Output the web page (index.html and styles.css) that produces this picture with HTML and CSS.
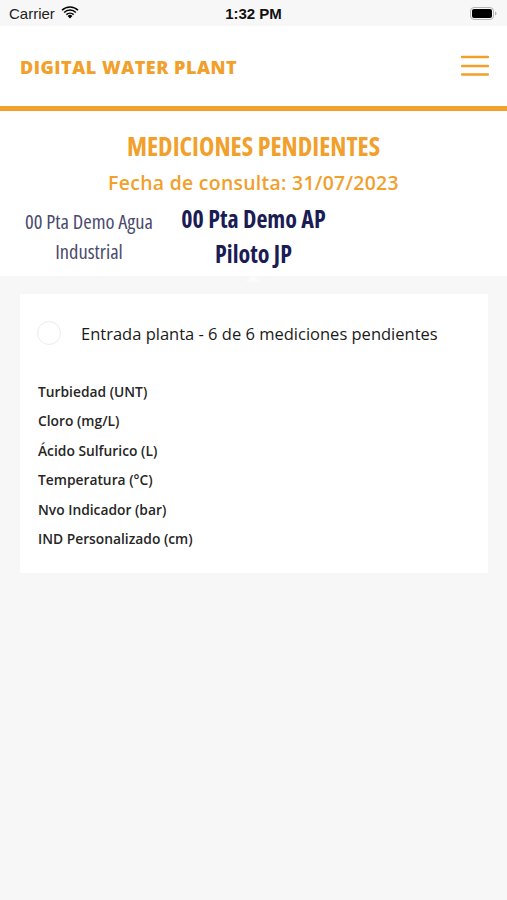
FILE: index.html
```html
<!DOCTYPE html>
<html lang="es">
<head>
<meta charset="utf-8">
<title>Digital Water Plant</title>
<link rel="stylesheet" href="styles.css">
</head>
<body>
<div class="status">
  <div class="status-left">
    <span class="carrier">Carrier</span>
    <svg class="wifi" width="18" height="13" viewBox="0 0 18 13"><path d="M9 12.5 L6.6 9.9 A3.4 3.4 0 0 1 11.4 9.9 Z" fill="#000"/><path d="M4.8 8.1 A6 6 0 0 1 13.2 8.1 L12.1 9.2 A4.5 4.5 0 0 0 5.9 9.2 Z" fill="#000"/><path d="M2.6 5.9 A9.2 9.2 0 0 1 15.4 5.9 L14.3 7 A7.6 7.6 0 0 0 3.7 7 Z" fill="#000"/><path d="M0.4 3.7 A12.3 12.3 0 0 1 17.6 3.7 L16.5 4.8 A10.8 10.8 0 0 0 1.5 4.8 Z" fill="#000"/></svg>
  </div>
  <span class="time">1:32 PM</span>
  <svg class="battery" width="27" height="13" viewBox="0 0 27 13"><rect x="0.5" y="0.5" width="23" height="12" rx="3.5" fill="none" stroke="#b5b5b5"/><rect x="2" y="2" width="20" height="9" rx="2" fill="#000"/><path d="M25 4.5 Q26.5 5 26.5 6.5 Q26.5 8 25 8.5 Z" fill="#b5b5b5"/></svg>
</div>

<header class="header">
  <span class="brand">DIGITAL WATER PLANT</span>
  <svg class="menu" width="28" height="22" viewBox="0 0 28 22"><path d="M1 2h26M1 11h26M1 19.5h26" stroke="#f1a02b" stroke-width="2.4" stroke-linecap="round"/></svg>
</header>
<div class="rule"></div>

<section class="summary">
  <h1 class="title">MEDICIONES PENDIENTES</h1>
  <p class="date">Fecha de consulta: 31/07/2023</p>
  <div class="plant-row">
    <div class="client">00 Pta Demo Agua<br>Industrial</div>
    <div class="plant">00 Pta Demo AP<br>Piloto JP</div>
  </div>
  <span class="notch"></span>
</section>

<main class="content">
  <div class="card">
    <div class="card-head">
      <span class="spinner"></span>
      <span class="card-title">Entrada planta - 6 de 6 mediciones pendientes</span>
    </div>
    <ul class="items">
      <li>Turbiedad (UNT)</li>
      <li>Cloro (mg/L)</li>
      <li>Ácido Sulfurico (L)</li>
      <li>Temperatura (°C)</li>
      <li>Nvo Indicador (bar)</li>
      <li>IND Personalizado (cm)</li>
    </ul>
  </div>
</main>
</body>
</html>
```

FILE: styles.css
```css
* { box-sizing: border-box; }
html, body { margin: 0; padding: 0; }
body {
  width: 507px;
  height: 900px;
  background: #f7f7f7;
  font-family: "Open Sans", "Noto Sans", sans-serif;
  color: #222;
  overflow: hidden;
}
.status {
  height: 26px;
  background: #f7f7f7;
  display: flex;
  align-items: center;
  justify-content: space-between;
  padding: 0 10px 0 9px;
  font-family: "Liberation Sans", Arial, sans-serif;
  position: relative;
}
.status-left { display: flex; align-items: center; gap: 6px; }
.carrier { font-size: 15px; color: #222; }
.wifi { margin-top: -2px; }
.time {
  position: absolute;
  left: 0; right: 0;
  text-align: center;
  font-size: 15px;
  font-weight: bold;
  color: #111;
  pointer-events: none;
}
.battery { margin-top: 1px; }

.header {
  height: 80px;
  background: #fff;
  display: flex;
  align-items: center;
  justify-content: space-between;
  padding: 0 18px 0 20px;
}
.brand {
  color: #f1a02b;
  font-weight: 800;
  font-size: 18px;
  letter-spacing: 0.5px;
  margin-top: 1px;
}
.menu { display: block; }
.rule { height: 5px; background: #f1a02b; }

.summary {
  background: #fff;
  height: 165px;
  padding-top: 17px;
  text-align: center;
  position: relative;
}
.title {
  margin: 0;
  font-size: 26px;
  line-height: 36px;
  font-weight: 700;
  font-stretch: 75%;
  color: #f1a02b;
}
.date {
  margin: 0;
  font-size: 19.4px;
  line-height: 37px;
  font-weight: 600;
  color: #f1a02b;
  letter-spacing: 0.3px;
}
.plant-row { display: flex; }
.client {
  width: 178px;
  text-align: center;
  font-size: 20.5px;
  line-height: 30px;
  font-weight: 400;
  font-stretch: 75%;
  color: #4b4b6e;
  padding-top: 5px;
}
.plant {
  width: 151px;
  text-align: center;
  font-size: 24px;
  line-height: 35px;
  font-weight: 700;
  font-stretch: 75%;
  color: #1c1c55;
}
.notch {
  position: absolute;
  left: 246px;
  bottom: -6px;
  width: 0; height: 0;
  border-left: 7px solid transparent;
  border-right: 7px solid transparent;
  border-bottom: 7px solid #fbfbfb;
}

.content { padding: 18px 19px 0 20px; }
.card {
  background: #fff;
  height: 279px;
  padding: 27px 17px 0 17px;
}
.card-head {
  display: flex;
  align-items: center;
  gap: 20px;
}
.spinner {
  width: 24px; height: 24px;
  border-radius: 50%;
  border: 1px solid #ececec;
  flex: none;
}
.card-title {
  font-size: 16.5px;
  font-weight: 500;
  color: #1a1a1a;
}
.items {
  list-style: none;
  margin: 32px 0 0 1px;
  padding: 0;
}
.items li {
  font-size: 13.8px;
  font-weight: 600;
  line-height: 29.4px;
  color: #262626;
}
```
